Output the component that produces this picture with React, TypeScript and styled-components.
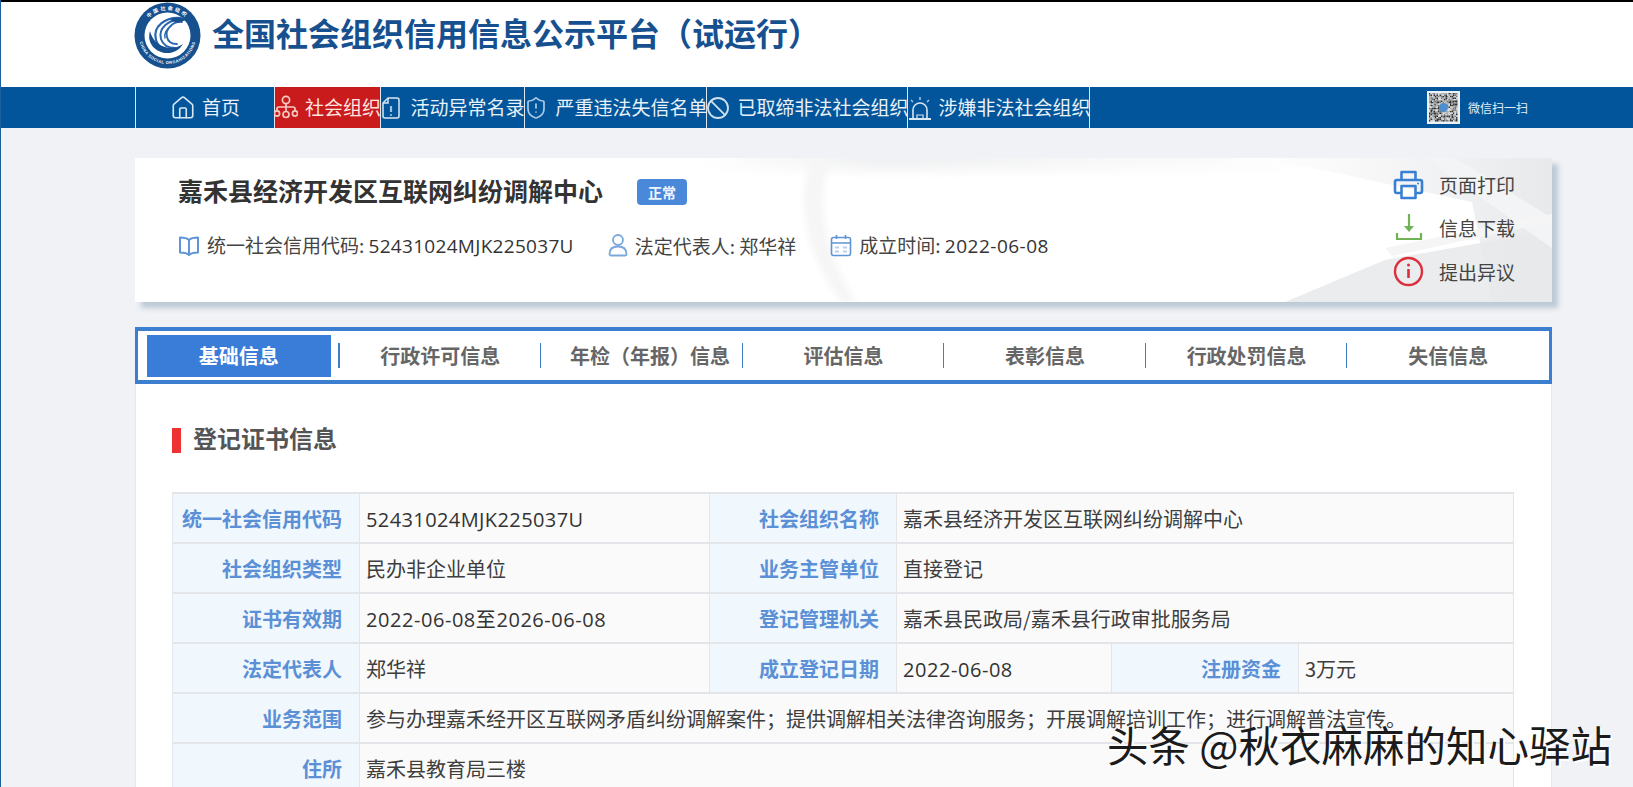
import React from "react";
import styled, { createGlobalStyle } from "styled-components";
import { House, ShieldAlert, Ban } from "lucide-react";

const Global = createGlobalStyle`
  html, body { margin: 0; padding: 0; height: 100%; overflow: hidden; }
  body {
    background: #f0f2f5;
    color: #333;
    font-family: "Noto Sans CJK SC", "Noto Sans", sans-serif;
  }
  #root { height: 787px; overflow: hidden; }
`;

const Page = styled.div`
  position: relative;
  height: 787px;
  overflow: hidden;
  border-left: 1px solid #1d5f9e;
  box-sizing: border-box;
`;

const Header = styled.header`
  height: 87px;
  box-sizing: border-box;
  border-top: 2px solid #000;
  margin-left: -1px;
  background: #fff;
  display: flex;
  align-items: flex-start;
  padding-left: 134px;
  gap: 11px;
`;

const SiteTitle = styled.h1`
  margin: 0;
  font-size: 32px;
  line-height: 60px;
  font-weight: 700;
  color: #17508f;
  white-space: nowrap;
`;

const Nav = styled.nav`
  height: 41px;
  background: #02559a;
  display: flex;
  padding-left: 134px;
`;

const NavItem = styled.a<{ $w: number; $gap: number; $active?: boolean }>`
  width: ${(p) => p.$w}px;
  box-sizing: border-box;
  border-right: 1px solid #dfe8f0;
  background: ${(p) => (p.$active ? "#c91a1c" : "transparent")};
  color: ${(p) => (p.$active ? "#ffe4e0" : "#e8f1f8")};
  display: flex;
  align-items: center;
  justify-content: center;
  gap: ${(p) => p.$gap}px;
  font-size: 19px;
  line-height: 37px;
  padding-bottom: 2px;
  white-space: nowrap;
  &:first-child { border-left: 1px solid #dfe8f0; }
  svg { flex: none; margin-top: 2px; }
`;

const Wechat = styled.div`
  margin-left: auto;
  padding-right: 105px;
  display: flex;
  align-items: center;
  gap: 8px;
  font-size: 12px;
  color: #e3eef7;
`;

const Qr = styled.svg`
  width: 33px;
  height: 33px;
  display: block;
`;

const Main = styled.main`
  margin: 30px 0 0 134px;
  width: 1417px;
`;

const InfoCard = styled.section`
  position: relative;
  height: 144px;
  box-sizing: border-box;
  padding: 15px 37px 0 43px;
  background: #fff;
  box-shadow: 6px 6px 5px rgba(172, 188, 204, 0.75);
  display: flex;
  justify-content: space-between;
`;

const CardArt = styled.svg`
  position: absolute;
  inset: 0;
  width: 100%;
  height: 100%;
`;

const CardLeft = styled.div`
  position: relative;
`;

const TitleRow = styled.div`
  display: flex;
  align-items: center;
  gap: 34px;
  height: 34px;
`;

const OrgName = styled.h2`
  margin: 0;
  font-size: 25px;
  font-weight: 700;
  color: #333;
  white-space: nowrap;
`;

const Badge = styled.span`
  width: 50px;
  height: 26px;
  margin-top: 4px;
  border-radius: 4px;
  background: #4a88d9;
  color: #eef5fd;
  font-size: 14px;
  font-weight: 700;
  display: flex;
  align-items: center;
  justify-content: center;
`;

const MetaRow = styled.div`
  margin-top: 24px;
  display: flex;
  gap: 34px;
  height: 28px;
`;

const Meta = styled.div`
  display: flex;
  align-items: center;
  gap: 7px;
  font-size: 19px;
  color: #444;
  white-space: nowrap;
  svg { flex: none; }
`;

const Latin = styled.span<{ $track: number }>`
  font-family: "Open Sans", "Noto Sans CJK SC", sans-serif;
  letter-spacing: ${(p) => p.$track}px;
  color: #333;
`;

const Actions = styled.div`
  position: relative;
  display: flex;
  flex-direction: column;
  gap: 13.7px;
  margin-top: -4px;
`;

const Action = styled.div`
  display: flex;
  align-items: center;
  gap: 15px;
  height: 30px;
  font-size: 19px;
  color: #444;
  white-space: nowrap;
  svg { flex: none; width: 31px; height: 31px; }
`;

const Tabs = styled.div`
  margin-top: 25px;
  height: 57px;
  box-sizing: border-box;
  border: 4px solid #3c7fd0;
  border-left-width: 3px;
  border-right-width: 3px;
  background: #fff;
  display: grid;
  grid-template-columns: repeat(7, 1fr);
  align-items: center;
`;

const Tab = styled.div<{ $active?: boolean; $last?: boolean; $shift?: number }>`
  position: relative;
  font-size: 20px;
  font-weight: 700;
  text-align: center;
  line-height: 41px;
  height: 42px;
  box-sizing: border-box;
  padding-left: ${(p) => p.$shift ?? 0}px;
  color: ${(p) => (p.$active ? "#fff" : "#666")};
  background: ${(p) => (p.$active ? "#3a7dd8" : "transparent")};
  margin: ${(p) => (p.$active ? "0 9px 0 9px" : "0")};
  &::after {
    content: "";
    display: ${(p) => (p.$last ? "none" : "block")};
    position: absolute;
    right: ${(p) => (p.$active ? "-9px" : "0")};
    top: 8px;
    height: 25px;
    width: ${(p) => (p.$active ? "2px" : "1px")};
    background: #3f7fc4;
  }
`;

const Panel = styled.section`
  background: #fff;
  border: 1px solid #e6e8ea;
  border-top: none;
  padding: 43px 36px 0 36px;
  height: 420px;
  box-sizing: border-box;
`;

const SectionTitle = styled.h3`
  margin: 0 0 39px;
  height: 26px;
  display: flex;
  align-items: center;
  gap: 12px;
  font-size: 24px;
  font-weight: 700;
  color: #555;
  line-height: 26px;
  &::before {
    content: "";
    width: 9px;
    height: 25px;
    background: #ee3232;
  }
`;

const SectionText = styled.span`
  margin-bottom: 4px;
`;

const Table = styled.table`
  width: 1341px;
  border-collapse: collapse;
  table-layout: fixed;
  font-size: 20px;
`;

const Row = styled.tr`
  height: 50px;
`;

const Label = styled.th`
  box-sizing: border-box;
  background: #f0f7fd;
  border: 1px solid #e3e5e8;
  border-width: 2px 1px;
  color: #5b90d6;
  font-weight: 700;
  text-align: right;
  padding: 0 17px 0 0;
  white-space: nowrap;
`;

const Value = styled.td`
  box-sizing: border-box;
  background: #fafafa;
  border: 1px solid #e3e5e8;
  border-width: 2px 1px;
  color: #3e3e3e;
  padding: 0 0 0 6px;
  white-space: nowrap;
`;

const Watermark = styled.div`
  position: absolute;
  left: 1106px;
  top: 719px;
  font-size: 41.5px;
  line-height: 50px;
  font-weight: 400;
  color: #1b1b1b;
  text-shadow: 2px 2px 0 #fff, 1px 1px 0 #fff;
  white-space: nowrap;
`;

const Logo = () => (
  <svg width="67" height="67" viewBox="0 0 67 67" aria-hidden="true">
    <defs>
      <path id="logoTop" d="M8 33.5a25.5 25.5 0 0 1 51 0" />
      <path id="logoBottom" d="M5 33.5a28.5 28.5 0 0 0 57 0" />
    </defs>
    <circle cx="33.5" cy="33.5" r="33" fill="#17508f" />
    <circle cx="33.5" cy="33.5" r="23" fill="#fff" />
    <text fontSize="5" fill="#fff" fontWeight="700" textAnchor="middle" letterSpacing="2">
      <textPath href="#logoTop" startOffset="50%">中国社会组织</textPath>
    </text>
    <text fontSize="4" fill="#fff" fontWeight="700" textAnchor="middle" letterSpacing=".5" fontFamily="Liberation Sans, sans-serif">
      <textPath href="#logoBottom" startOffset="50%">CHINA SOCIAL ORGANIZATIONS</textPath>
    </text>
    <g fill="none" stroke="#2a66ad" strokeLinecap="round">
      <path d="M46 16C32 15 18 24 22 38c2 7 9 11 17 10" strokeWidth="2.2" />
      <path d="M47 18C35 17 24 26 27 37c2 6 7 9 14 9" strokeWidth="2" />
      <path d="M48 20c-9-1-17 7-15 15 1 5 5 7 10 7" strokeWidth="1.8" />
      <path d="M37 24c-5 3-7 8-6 12" strokeWidth="1.4" />
    </g>
    <path d="M16 29c-4 13 7 23 19 22 6-.5 11-4 14-9-6 4-12 5-18 3-8-2-13-8-15-16z" fill="#17508f" />
    <path d="M36 18c5-3 11-3 14-1l3 1-4 1c-3 2-7 2-13-1z" fill="#17508f" />
  </svg>
);

const OrgIcon = () => (
  <svg width="24" height="28" viewBox="0 0 24 28" fill="none" stroke="#f6c9c2" strokeWidth="1.7">
    <circle cx="12" cy="6" r="3.6" />
    <path d="M12 10v7M3 16.5v-1.5a2 2 0 0 1 2-2h14a2 2 0 0 1 2 2v1.5" />
    <circle cx="3" cy="19.5" r="2.6" />
    <circle cx="12" cy="20.5" r="3" />
    <circle cx="21" cy="19.5" r="2.6" />
  </svg>
);

const DocIcon = () => (
  <svg width="20" height="24" viewBox="0 0 20 24" fill="none" stroke="#d7e6f3" strokeWidth="1.5">
    <path d="M7 2h9a2 2 0 0 1 2 2v16a2 2 0 0 1-2 2H4a2 2 0 0 1-2-2V7z" />
    <path d="M7 2v5H2" />
    <path d="M10 10v6" stroke="#9cc2e0" strokeWidth="2.2" />
    <circle cx="10" cy="19" r="1.1" fill="#9cc2e0" stroke="none" />
  </svg>
);

const SirenIcon = () => (
  <svg width="26" height="26" viewBox="0 0 26 26" fill="none" stroke="#d7e6f3" strokeWidth="1.6">
    <path d="M6 23v-8a7 7 0 0 1 14 0v8" />
    <path d="M10 23v-3h6v3" strokeWidth="1.2" />
    <path d="M2 24h22" strokeWidth="2" />
    <path d="M13 2v3M4 5l2 2M22 5l-2 2" stroke="#9cc2e0" />
  </svg>
);

const BookIcon = () => (
  <svg width="22" height="23" viewBox="0 0 22 23" fill="none" stroke="#5f95d6" strokeWidth="2" strokeLinejoin="round">
    <path d="M11 6C9 4 6 3.5 2 3.5v15c4 0 7 .5 9 2.5 2-2 5-2.5 9-2.5v-15C16 3.5 13 4 11 6z" />
    <path d="M11 6v15" />
  </svg>
);

const UserIcon = () => (
  <svg width="20" height="24" viewBox="0 0 20 24" fill="none" stroke="#7ba7dd" strokeWidth="1.8">
    <circle cx="10" cy="7" r="5" />
    <path d="M1.5 21c0-5 3.5-7.5 8.5-7.5s8.5 2.5 8.5 7.5a1.5 1.5 0 0 1-1.5 1.5H3A1.5 1.5 0 0 1 1.5 21z" />
  </svg>
);

const CalendarIcon = () => (
  <svg width="22" height="23" viewBox="0 0 22 23" fill="none" stroke="#5f95d6" strokeWidth="1.6">
    <rect x="1.5" y="3.5" width="19" height="18" rx="2" />
    <path d="M1.5 9h19M6.5 1v4M15.5 1v4" />
    <path d="M5 12.5h4v2H5zM13 12.5h4v2h-4zM5 16.5h4v2H5zM13 16.5h4v2h-4z" fill="#5f95d6" fillOpacity=".45" stroke="none" />
  </svg>
);

const PrintIcon = () => (
  <svg viewBox="0 0 31 31" fill="none" stroke="#3a80d2" strokeWidth="2.6" strokeLinejoin="round">
    <path d="M8.5 11V3h14v8" />
    <path d="M8 24H4a2 2 0 0 1-2-2V13a2 2 0 0 1 2-2h23a2 2 0 0 1 2 2v9a2 2 0 0 1-2 2h-4" />
    <rect x="8.5" y="17" width="14" height="12" />
    <circle cx="25" cy="14.5" r="1" fill="#3a80d2" stroke="none" />
  </svg>
);

const DownloadIcon = () => (
  <svg viewBox="0 0 31 31" fill="none" stroke="#6fb356" strokeWidth="2.2">
    <path d="M16 2v16" />
    <path d="M11 14h10l-5 6z" fill="#6fb356" stroke="none" />
    <path d="M4 21v6h24v-6" />
  </svg>
);

const InfoIcon = () => (
  <svg viewBox="0 0 31 31" fill="none" stroke="#dc2f3c" strokeWidth="2.4">
    <circle cx="15.5" cy="15.5" r="13.5" />
    <path d="M15.5 13v9" strokeWidth="2.6" />
    <circle cx="15.5" cy="9" r="1.5" fill="#dc2f3c" stroke="none" />
  </svg>
);

const qrCells: [number, number, string][] = [];
let seed = 17;
for (let y = 0; y < 19; y++) {
  for (let x = 0; x < 19; x++) {
    seed = (seed * 137 + 89) % 1009;
    const v = seed % 4;
    qrCells.push([x, y, v === 0 ? "#333" : v === 1 ? "#777" : v === 2 ? "#a8a8a8" : "#d4d4d4"]);
  }
}

const QrCode = () => (
  <Qr viewBox="0 0 33 33">
    <rect width="33" height="33" fill="#eaf2f8" />
    {qrCells.map(([x, y, c]) => (
      <rect key={`${x}-${y}`} x={2 + x * 1.5} y={2 + y * 1.5} width="1.5" height="1.5" fill={c} />
    ))}
    <circle cx="16.5" cy="16.5" r="4.5" fill="#4c8fd0" />
  </Qr>
);

const navItems = [
  { w: 140, gap: 6, text: "首页", icon: <House size={26} strokeWidth={1.5} color="#d7e6f3" /> },
  { w: 106, gap: 7, text: "社会组织", icon: <OrgIcon />, active: true },
  { w: 144, gap: 10, text: "活动异常名录", icon: <DocIcon /> },
  { w: 182, gap: 8, text: "严重违法失信名单", icon: <ShieldAlert size={24} strokeWidth={1.7} color="#a9cbe6" /> },
  { w: 201, gap: 8, text: "已取缔非法社会组织", icon: <Ban size={24} strokeWidth={1.8} color="#cfe0ef" /> },
  { w: 182, gap: 6, text: "涉嫌非法社会组织", icon: <SirenIcon /> },
];

const tabs = ["基础信息", "行政许可信息", "年检（年报）信息", "评估信息", "表彰信息", "行政处罚信息", "失信信息"];

export default function App() {
  return (
    <Page>
      <Global />
      <Header>
        <Logo />
        <SiteTitle>全国社会组织信用信息公示平台（试运行）</SiteTitle>
      </Header>
      <Nav>
        {navItems.map((n) => (
          <NavItem key={n.text} $w={n.w} $gap={n.gap} $active={n.active}>
            {n.icon}
            {n.text}
          </NavItem>
        ))}
        <Wechat>
          <QrCode />
          微信扫一扫
        </Wechat>
      </Nav>
      <Main>
        <InfoCard>
          <CardArt viewBox="0 0 1417 144" preserveAspectRatio="none" aria-hidden="true">
            <defs>
              <linearGradient id="fadeRight" x1="0" x2="1" y1="0" y2="0">
                <stop offset="0" stopColor="#e8e9eb" stopOpacity="0" />
                <stop offset="1" stopColor="#e8e9eb" />
              </linearGradient>
              <linearGradient id="fadeBand" x1="0" x2="1" y1="0" y2="0">
                <stop offset="0" stopColor="#e9eaec" stopOpacity="0" />
                <stop offset=".3" stopColor="#e9eaec" stopOpacity=".7" />
                <stop offset="1" stopColor="#e9eaec" stopOpacity="0" />
              </linearGradient>
              <filter id="soft" x="-10%" y="-30%" width="120%" height="160%">
                <feGaussianBlur stdDeviation="6" />
              </filter>
              <filter id="softer" x="-20%" y="-20%" width="140%" height="140%">
                <feGaussianBlur stdDeviation="3" />
              </filter>
            </defs>
            <rect x="560" y="-14" width="640" height="26" fill="url(#fadeBand)" filter="url(#soft)" />
            <path d="M1150 144l100-42 167-30v72z" fill="#ebecee" />
            <path d="M1130 0h287v144h-60l-20-100z" fill="url(#fadeRight)" />
            <path d="M1290 0l127 90V60L1320 0z" fill="#f3f4f5" />
            <path d="M1250 90l167-34v8l-160 34z" fill="#f5f5f6" />
            <path d="M676 0c-14 40-10 90 30 144h16C690 96 680 44 696 0z" fill="#f6f6f7" filter="url(#softer)" />
          </CardArt>
          <CardLeft>
            <TitleRow>
              <OrgName>嘉禾县经济开发区互联网纠纷调解中心</OrgName>
              <Badge>正常</Badge>
            </TitleRow>
            <MetaRow>
              <Meta>
                <BookIcon />
                <span>统一社会信用代码: <Latin $track={0.3}>52431024MJK225037U</Latin></span>
              </Meta>
              <Meta>
                <UserIcon />
                法定代表人: 郑华祥
              </Meta>
              <Meta>
                <CalendarIcon />
                <span>成立时间: <Latin $track={0.5}>2022-06-08</Latin></span>
              </Meta>
            </MetaRow>
          </CardLeft>
          <Actions>
            <Action>
              <PrintIcon />
              页面打印
            </Action>
            <Action>
              <DownloadIcon />
              信息下载
            </Action>
            <Action>
              <InfoIcon />
              提出异议
            </Action>
          </Actions>
        </InfoCard>
        <Tabs>
          {tabs.map((t, i) => (
            <Tab key={t} $active={i === 0} $last={i === tabs.length - 1} $shift={t.includes("（") ? 16 : 0}>
              {t}
            </Tab>
          ))}
        </Tabs>
        <Panel>
          <SectionTitle>
            <SectionText>登记证书信息</SectionText>
          </SectionTitle>
          <Table>
            <colgroup>
              <col width="187" />
              <col width="350" />
              <col width="187" />
              <col width="215" />
              <col width="187" />
              <col width="215" />
            </colgroup>
            <tbody>
              <Row>
                <Label>统一社会信用代码</Label>
                <Value><Latin $track={0.4}>52431024MJK225037U</Latin></Value>
                <Label>社会组织名称</Label>
                <Value colSpan={3}>嘉禾县经济开发区互联网纠纷调解中心</Value>
              </Row>
              <Row>
                <Label>社会组织类型</Label>
                <Value>民办非企业单位</Value>
                <Label>业务主管单位</Label>
                <Value colSpan={3}>直接登记</Value>
              </Row>
              <Row>
                <Label>证书有效期</Label>
                <Value><Latin $track={0.55}>2022-06-08至2026-06-08</Latin></Value>
                <Label>登记管理机关</Label>
                <Value colSpan={3}>嘉禾县民政局/嘉禾县行政审批服务局</Value>
              </Row>
              <Row>
                <Label>法定代表人</Label>
                <Value>郑华祥</Value>
                <Label>成立登记日期</Label>
                <Value><Latin $track={0.55}>2022-06-08</Latin></Value>
                <Label>注册资金</Label>
                <Value>3万元</Value>
              </Row>
              <Row>
                <Label>业务范围</Label>
                <Value colSpan={5}>参与办理嘉禾经开区互联网矛盾纠纷调解案件；提供调解相关法律咨询服务；开展调解培训工作；进行调解普法宣传。</Value>
              </Row>
              <Row>
                <Label>住所</Label>
                <Value colSpan={5}>嘉禾县教育局三楼</Value>
              </Row>
            </tbody>
          </Table>
        </Panel>
      </Main>
      <Watermark>头条 @秋衣麻麻的知心驿站</Watermark>
    </Page>
  );
}
